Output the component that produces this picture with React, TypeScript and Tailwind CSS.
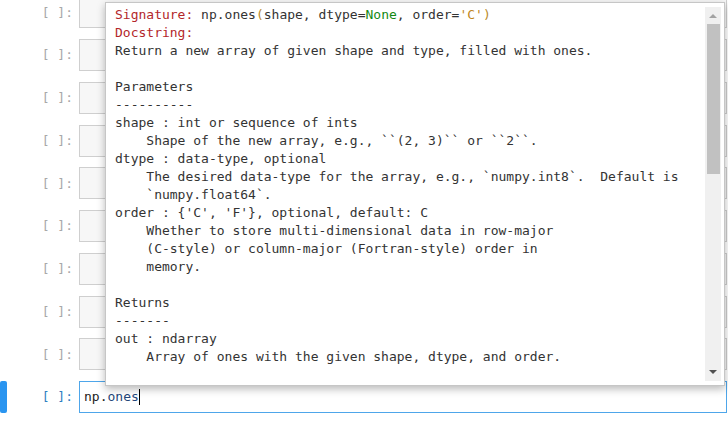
import React from "react";

const mono = { fontFamily: '"DejaVu Sans Mono", "Liberation Mono", monospace' };

function Row({ active, children }: { active?: boolean; children?: React.ReactNode }) {
  return (
    <div className="flex items-stretch h-[32px] shrink-0">
      <div className={"w-[7px] rounded-[2px] " + (active ? "bg-[#2a95f0]" : "bg-transparent")} />
      <div
        className={
          "w-[66px] flex items-center justify-end text-[13px] " +
          (active ? "text-[#307fc1]" : "text-[#a8a8a8]")
        }
      >
        [&nbsp;]:
      </div>
      <div
        className={
          "ml-[6px] w-[648px] border flex items-center pl-[4px] text-[13px] " +
          (active ? "bg-white border-[#4ea6ea]" : "bg-[#f7f7f7] border-[#cfcfcf]")
        }
      >
        {children}
      </div>
    </div>
  );
}

const lines: React.ReactNode[] = [
  <>
    <span className="text-[#b3262a]">Signature:</span> np.ones<span className="text-[#b98a2a]">(</span>shape, dtype=
    <span className="text-[#138a13]">None</span>, order=<span className="text-[#c0861c]">'C'</span>
    <span className="text-[#b98a2a]">)</span>
  </>,
  <span className="text-[#b3262a]">Docstring:</span>,
  "Return a new array of given shape and type, filled with ones.",
  "",
  "Parameters",
  "----------",
  "shape : int or sequence of ints",
  "    Shape of the new array, e.g., ``(2, 3)`` or ``2``.",
  "dtype : data-type, optional",
  "    The desired data-type for the array, e.g., `numpy.int8`.  Default is",
  "    `numpy.float64`.",
  "order : {'C', 'F'}, optional, default: C",
  "    Whether to store multi-dimensional data in row-major",
  "    (C-style) or column-major (Fortran-style) order in",
  "    memory.",
  "",
  "Returns",
  "-------",
  "out : ndarray",
  "    Array of ones with the given shape, dtype, and order.",
];

export default function App() {
  return (
    <div className="relative w-[728px] h-[425px] overflow-hidden bg-white" style={mono}>
      <div className="flex flex-col gap-[10.75px] mt-[-3.75px]">
        <Row />
        <Row />
        <Row />
        <Row />
        <Row />
        <Row />
        <Row />
        <Row />
        <Row />
        <Row active>
          <span className="text-[#222]">np.</span>
          <span className="text-[#24467a]">ones</span>
          <span className="inline-block w-[1px] h-[16px] bg-black" />
        </Row>
      </div>

      <div className="absolute left-[105px] top-[2px] w-[620px] h-[384px] bg-white border border-[#c6c6c6] shadow-[0_3px_8px_rgba(0,0,0,0.28)] overflow-hidden">
        <div className="pl-[9px] pt-[3px] text-[13px] leading-[18px] text-[#333] whitespace-pre">
          {lines.map((l, i) => (
            <div key={i} className="h-[18px]">
              {l}
            </div>
          ))}
        </div>
        <div className="absolute right-[3px] top-[4px] bottom-[4px] w-[16px] bg-[#f0f0f0]">
          <div className="flex justify-center pt-[7px]">
            <div className="w-0 h-0 border-l-[4px] border-r-[4px] border-b-[4px] border-l-transparent border-r-transparent border-b-[#a3a3a3]" />
          </div>
          <div className="absolute left-[2px] right-[1px] top-[17px] h-[150px] bg-[#c1c1c1]" />
          <div className="absolute left-0 right-0 bottom-[7px] flex justify-center">
            <div className="w-0 h-0 border-l-[4px] border-r-[4px] border-t-[4px] border-l-transparent border-r-transparent border-t-[#505050]" />
          </div>
        </div>
      </div>
    </div>
  );
}
